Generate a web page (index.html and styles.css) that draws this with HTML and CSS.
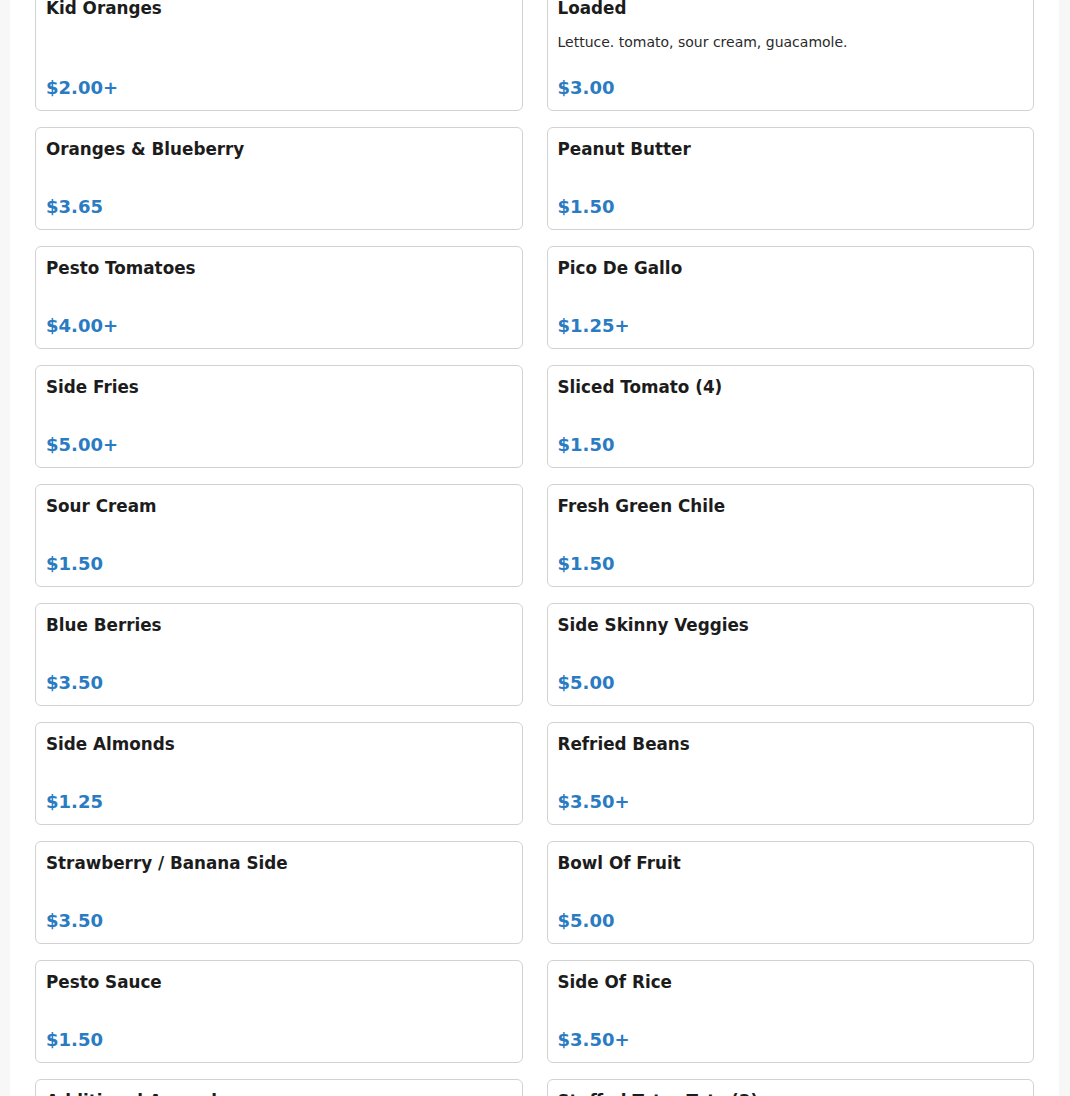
FILE: index.html
```html
<!DOCTYPE html>
<html lang="en">
<head>
<meta charset="utf-8">
<title>Menu - Sides</title>
<link rel="stylesheet" href="styles.css">
</head>
<body>
<main class="page">
  <div class="grid">
    <div class="card"><h3 class="name">Kid Oranges</h3><div class="price">$2.00+</div></div>
    <div class="card"><h3 class="name">Loaded</h3><p class="desc">Lettuce. tomato, sour cream, guacamole.</p><div class="price">$3.00</div></div>
    <div class="card"><h3 class="name">Oranges &amp; Blueberry</h3><div class="price">$3.65</div></div>
    <div class="card"><h3 class="name">Peanut Butter</h3><div class="price">$1.50</div></div>
    <div class="card"><h3 class="name">Pesto Tomatoes</h3><div class="price">$4.00+</div></div>
    <div class="card"><h3 class="name">Pico De Gallo</h3><div class="price">$1.25+</div></div>
    <div class="card"><h3 class="name">Side Fries</h3><div class="price">$5.00+</div></div>
    <div class="card"><h3 class="name">Sliced Tomato (4)</h3><div class="price">$1.50</div></div>
    <div class="card"><h3 class="name">Sour Cream</h3><div class="price">$1.50</div></div>
    <div class="card"><h3 class="name">Fresh Green Chile</h3><div class="price">$1.50</div></div>
    <div class="card"><h3 class="name">Blue Berries</h3><div class="price">$3.50</div></div>
    <div class="card"><h3 class="name">Side Skinny Veggies</h3><div class="price">$5.00</div></div>
    <div class="card"><h3 class="name">Side Almonds</h3><div class="price">$1.25</div></div>
    <div class="card"><h3 class="name">Refried Beans</h3><div class="price">$3.50+</div></div>
    <div class="card"><h3 class="name">Strawberry / Banana Side</h3><div class="price">$3.50</div></div>
    <div class="card"><h3 class="name">Bowl Of Fruit</h3><div class="price">$5.00</div></div>
    <div class="card"><h3 class="name">Pesto Sauce</h3><div class="price">$1.50</div></div>
    <div class="card"><h3 class="name">Side Of Rice</h3><div class="price">$3.50+</div></div>
    <div class="card"><h3 class="name">Additional Avocado</h3><div class="price">$2.00</div></div>
    <div class="card"><h3 class="name">Stuffed Tater Tots (3)</h3><div class="price">$4.00</div></div>
  </div>
</main>
</body>
</html>
```

FILE: styles.css
```css
html, body {
  margin: 0;
  padding: 0;
}
body {
  background: #f7f7f7;
  font-family: "DejaVu Sans", "Noto Sans", sans-serif;
  color: #1c1c1c;
  overflow: hidden;
  height: 1096px;
}
.page {
  background: #ffffff;
  margin: 0 11px 0 10px;
  padding: 0 25px 25px;
  min-height: 1200px;
}
.grid {
  display: grid;
  grid-template-columns: 1fr 1fr;
  column-gap: 24px;
  row-gap: 16px;
  margin-top: -14px;
}
.card {
  box-sizing: border-box;
  min-height: 103px;
  border: 1px solid #d2d2d2;
  border-radius: 6px;
  padding: 10px;
  display: flex;
  flex-direction: column;
  background: #fff;
}
.name {
  margin: 0;
  font-size: 16.8px;
  line-height: 22px;
  font-weight: bold;
  color: #1c1c1c;
}
.desc {
  margin: 13px 0 24px;
  font-size: 14px;
  line-height: 20px;
  color: #2a2a2a;
}
.price {
  margin-top: auto;
  font-size: 18px;
  line-height: 24px;
  font-weight: bold;
  color: #2a7bc2;
}
```
